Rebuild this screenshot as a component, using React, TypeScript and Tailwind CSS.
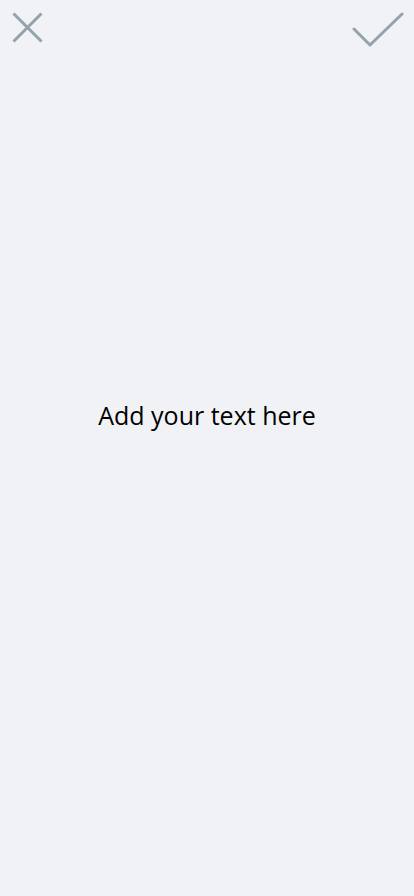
import React from 'react';

export default function App() {
  return (
    <div className="min-h-[896px] w-full bg-[#f0f2f6] flex flex-col" style={{ fontFamily: '"Open Sans", "Noto Sans", sans-serif' }}>
      <div className="flex items-start justify-between h-[60px]">
        <button className="mt-[12px] ml-[12px] w-[31px] h-[31px]">
          <svg width="31" height="31" viewBox="0 0 31 31" fill="none">
            <path d="M1.5 1.5 L29.5 29.5 M29.5 1.5 L1.5 29.5" stroke="#94a3ab" strokeWidth="3" />
          </svg>
        </button>
        <button className="mt-[12px] mr-[10px] w-[52px] h-[36px]">
          <svg width="52" height="36" viewBox="0 0 52 36" fill="none">
            <path d="M2 17 L18 33 L50 2" stroke="#94a3ab" strokeWidth="3" strokeLinecap="round" strokeLinejoin="round" />
          </svg>
        </button>
      </div>
      <div className="mt-[338px] text-center text-[25px] leading-[34px] text-black">Add your text here</div>
    </div>
  );
}
